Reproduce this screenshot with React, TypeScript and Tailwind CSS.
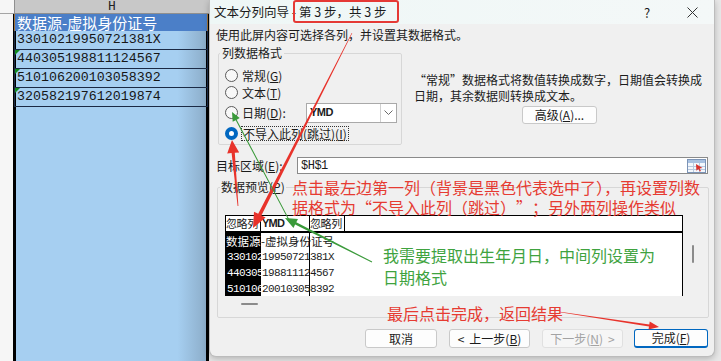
import React from 'react'

function arrow(x1: number, y1: number, x2: number, y2: number, w1: number, w2: number, hl: number, hw: number) {
  const dx = x2 - x1
  const dy = y2 - y1
  const len = Math.hypot(dx, dy)
  const ux = dx / len
  const uy = dy / len
  const nx = -uy
  const ny = ux
  const bx = x2 - ux * hl
  const by = y2 - uy * hl
  const pts = [
    [x1 + (nx * w1) / 2, y1 + (ny * w1) / 2],
    [bx + (nx * w2) / 2, by + (ny * w2) / 2],
    [bx + nx * hw, by + ny * hw],
    [x2, y2],
    [bx - nx * hw, by - ny * hw],
    [bx - (nx * w2) / 2, by - (ny * w2) / 2],
    [x1 - (nx * w1) / 2, y1 - (ny * w1) / 2],
  ]
  return pts.map((p) => p.map((v) => v.toFixed(1)).join(',')).join(' ')
}

function Radio({ on }: { on?: boolean }) {
  return on ? (
    <span className="w-[13px] h-[13px] rounded-full border-[4px] border-[#0067c0] bg-white shrink-0" />
  ) : (
    <span className="w-[13px] h-[13px] rounded-full border border-[#5a5a5a] bg-[#f8f8f8] shrink-0" />
  )
}

const sheetRows = ['33010219950721381X', '440305198811124567', '510106200103058392', '320582197612019874']

const preview = [
  { a: '330102', b: '19950721381X' },
  { a: '440305', b: '198811124567' },
  { a: '510106', b: '200103058392' },
]

function Btn({ children, w, tone }: { children: React.ReactNode; w: string; tone?: 'off' | 'main' }) {
  const base = 'h-[19px] rounded-[3px] flex items-center justify-center text-[12px] leading-none'
  if (tone === 'off') return <div className={`${base} ${w} border border-[#e0e0e0] bg-[#f6f6f6] text-[#a3a3a3]`}>{children}</div>
  if (tone === 'main') return <div className={`${base} ${w} border border-[#0067c0] border-b-2 bg-[#fdfdfd]`}>{children}</div>
  return <div className={`${base} ${w} border border-[#c9c9c9] bg-[#fdfdfd]`}>{children}</div>
}

export default function App() {
  return (
    <div className="relative w-[721px] h-[361px] overflow-hidden flex bg-[#e7e7e7] font-['Noto_Sans_CJK_SC',sans-serif] text-[#1b1b1b]">
      {/* spreadsheet column H */}
      <div className="w-[209px] h-full flex flex-col shrink-0">
        <div className="h-[14px] flex shrink-0">
          <div className="w-[14px] bg-[#f6f6f6] border-b border-[#a5a5a5]" />
          <div className="flex-1 bg-[#c8c8c8] border-b border-l border-[#8f8f8f] flex items-center justify-center text-[13px] leading-none font-['Liberation_Mono',monospace] text-[#222]">
            H
          </div>
        </div>
        <div className="flex-1 flex">
          <div className="w-[13px] bg-[#f6f6f6]" />
          <div className="flex-1 border-x-[3px] border-black bg-[linear-gradient(to_right,#a6cff1_85%,#8cadc9)] flex flex-col">
            <div className="-mx-[2px] h-[17px] bg-[#4b7fc8] border-x border-[#a0743a] flex items-center pl-[2px] text-[15px] leading-none text-white whitespace-nowrap">
              数据源-虚拟身份证号
            </div>
            {sheetRows.map((r, i) => (
              <div key={r} className="relative -mx-[2px] h-[19px] border border-t-0 border-[#1b2a45] flex items-center pl-[2px] font-['Liberation_Mono',monospace] text-[13.3px] leading-none text-[#161616]">
                {i > 0 && <span className="absolute left-0 top-0 w-0 h-0 border-t-[5px] border-r-[5px] border-t-[#118a1b] border-r-transparent" />}
                {r}
              </div>
            ))}
          </div>
        </div>
      </div>

      {/* wizard dialog */}
      <div className="w-[506px] h-[357px] bg-[#f0f0f0] border-x border-b border-[#bcbcbc] rounded-b-[7px] shadow-[0_2px_6px_rgba(0,0,0,0.22)] flex flex-col overflow-hidden shrink-0">
        <div className="h-[24px] bg-[linear-gradient(to_right,#eef7f6,#f4f8f8)] flex items-center pl-[4px] shrink-0">
          <span className="text-[12.5px] leading-none whitespace-nowrap">文本分列向导 - 第 3 步，共 3 步</span>
          <span className="ml-auto w-[46px] text-center text-[13px] leading-none">?</span>
          <span className="w-[44px] flex justify-center">
            <svg width="11" height="11" viewBox="0 0 11 11">
              <path d="M0.5 0.5 L10.5 10.5 M10.5 0.5 L0.5 10.5" stroke="#333" strokeWidth="1" />
            </svg>
          </span>
        </div>

        <div className="flex-1 flex flex-col px-[6px] text-[12px]">
          <div className="mt-[3px] h-[16px] leading-[16px] whitespace-nowrap">使用此屏内容可选择各列，并设置其数据格式。</div>

          <div className="mt-[2px] h-[100px] flex">
            <fieldset className="ml-[2px] w-[184px] h-[100px] border border-[#d7d7d7] rounded-[2px] shrink-0">
              <legend className="ml-[1px] px-[2px] leading-[16px]">列数据格式</legend>
              <div className="mt-[6px] pl-[6px] flex flex-col">
                <div className="h-[17px] flex items-center gap-[4px]">
                  <Radio />
                  <span>常规(<u>G</u>)</span>
                </div>
                <div className="h-[17px] flex items-center gap-[4px]">
                  <Radio />
                  <span>文本(<u>T</u>)</span>
                </div>
                <div className="h-[23px] flex items-center gap-[4px]">
                  <Radio />
                  <span className="w-[60px]">日期(<u>D</u>):</span>
                  <div className="w-[91px] h-[20px] border border-[#a9a9a9] bg-white flex">
                    <span className="flex-1 pl-[3px] flex items-center text-[11px] font-bold tracking-[-0.5px] font-['Liberation_Sans',sans-serif]">YMD</span>
                    <span className="w-[16px] border-l border-[#d0d0d0] flex items-center justify-center">
                      <svg width="9" height="6" viewBox="0 0 9 6">
                        <path d="M0.5 0.5 L4.5 4.5 L8.5 0.5" stroke="#6a6a6a" fill="none" />
                      </svg>
                    </span>
                  </div>
                </div>
                <div className="h-[18px] flex items-center gap-[3px]">
                  <Radio on />
                  <span className="h-[15px] leading-[13px] border border-dotted border-[#333] px-[1px] whitespace-nowrap">
                    不导入此列(跳过)(<u>I</u>)
                  </span>
                </div>
              </div>
            </fieldset>

            <div className="flex-1 pl-[12px] flex flex-col">
              <div className="mt-[27px] leading-[16px] whitespace-nowrap">
                “常规”数据格式将数值转换成数字，日期值会转换成
                <br />
                日期，其余数据则转换成文本。
              </div>
              <div className="ml-[108px] mt-[2px] w-[75px] h-[18px] rounded-[3px] border border-[#c9c9c9] bg-[#fdfdfd] flex items-center justify-center leading-none">
                高级(<u>A</u>)...
              </div>
            </div>
          </div>

          <div className="mt-[12px] h-[17px] flex items-center">
            <span className="w-[81px] whitespace-nowrap">目标区域(<u>E</u>):</span>
            <div className="flex-1 h-[17px] border border-[#8a8a8a] bg-white flex items-center justify-between pl-[3px] pr-[1px]">
              <span className="text-[12px] font-['Liberation_Mono',monospace] tracking-[-0.5px]">$H$1</span>
              <svg width="19" height="14" viewBox="0 0 19 14">
                <rect x="0.5" y="0.5" width="18" height="13" fill="#f3f7fc" stroke="#7b93b6" />
                <rect x="1" y="1" width="17" height="3" fill="#a8c1e1" />
                <path d="M1 7.5 H18 M1 10.5 H18 M6.5 4 V13 M12.5 4 V13" stroke="#b9c9df" />
                <path d="M9 5 L15.5 9 L12.6 9.4 L14 12 L12.8 12.6 L11.4 10 L9.4 11.8 Z" fill="#d8322d" />
              </svg>
            </div>
          </div>

          <fieldset className="mt-[5px] ml-[1px] w-[492px] h-[139px] border border-[#d7d7d7] rounded-[2px]">
            <legend className="ml-[2px] px-[1px] leading-[16px]">数据预览(<u>P</u>)</legend>
            <div className="mt-[20px] ml-[7px] flex">
              <div className="w-[458px] h-[81px] border-x border-t border-black bg-white overflow-hidden flex flex-col">
                <div className="h-[17px] border-b-2 border-black flex shrink-0 text-[11px] leading-[15px] tracking-[-0.4px]">
                  <span className="w-[35px] border-r border-black whitespace-nowrap">忽略列</span>
                  <span className="w-[49px] border-r border-black pl-[1px] font-bold tracking-[-0.8px] font-['Liberation_Sans',sans-serif]">YMD</span>
                  <span className="w-[35px] border-r border-black whitespace-nowrap">忽略列</span>
                </div>
                <div className="h-[16px] flex shrink-0 text-[11.5px] leading-[16px]">
                  <span className="w-[35px] bg-black text-white whitespace-nowrap overflow-hidden">数据源-虚拟</span>
                  <span className="w-[49px] border-r border-black whitespace-nowrap">-虚拟身份证号</span>
                </div>
                {preview.map((p) => (
                  <div key={p.a} className="h-[16px] flex shrink-0 font-['Liberation_Mono',monospace] text-[11px] leading-[16px] tracking-[-0.6px]">
                    <span className="w-[35px] bg-black text-white whitespace-nowrap overflow-hidden pl-[1px]">{p.a}</span>
                    <span className="w-[49px] border-r border-black whitespace-nowrap pl-[1px]">{p.b}</span>
                  </div>
                ))}
                <div className="flex-1 flex">
                  <span className="w-[35px] bg-black" />
                  <span className="w-[49px] border-r border-black" />
                </div>
              </div>
              <div className="w-[25px]">
                <div className="ml-[9px] mt-[30px] w-[2px] h-[18px] bg-[#8b8b8b] rounded" />
              </div>
            </div>
            <div className="mt-[7px] ml-[23px] w-[17px] h-[2px] bg-[#8b8b8b] rounded" />
          </fieldset>

          <div className="mt-[11px] flex justify-end">
            <Btn w="w-[72px]">取消</Btn>
            <div className="w-[12px]" />
            <Btn w="w-[81px]">
              <span className="mr-[5px]">&lt;</span>上一步(<u>B</u>)
            </Btn>
            <div className="w-[12px]" />
            <Btn w="w-[81px]" tone="off">
              下一步(<u>N</u>)<span className="ml-[5px]">&gt;</span>
            </Btn>
            <div className="w-[11px]" />
            <Btn w="w-[74px]" tone="main">
              完成(<u>F</u>)
            </Btn>
          </div>
        </div>
      </div>

      {/* annotations drawn over the screenshot */}
      <div className="absolute left-[293px] top-0 w-[106px] h-[23px] border-2 border-[#e53935] rounded-[3px]" />
      <div className="absolute left-[292px] top-[177px] text-[16px] leading-[20px] text-[#e63b32] whitespace-nowrap">
        点击最左边第一列（背景是黑色代表选中了），再设置列数
        <br />
        据格式为<span className="inline-block w-[16px] text-right">“</span>不导入此列（跳过）<span className="inline-block w-[16px] text-left">”</span>；另外两列操作类似
      </div>
      <div className="absolute left-[383px] top-[244px] text-[16px] leading-[22px] text-[#3fa33f] whitespace-nowrap">
        我需要提取出生年月日，中间列设置为
        <br />
        日期格式
      </div>
      <div className="absolute left-[387px] top-[303px] text-[16px] leading-[20px] text-[#e63b32] whitespace-nowrap">
        最后点击完成，返回结果
      </div>
      <svg className="absolute inset-0 pointer-events-none" width="721" height="361" viewBox="0 0 721 361">
        <polygon points={arrow(352, 33, 253, 228, 0.6, 3.6, 15, 6.5)} fill="#e8332b" />
        <polygon points={arrow(238, 206, 232, 140, 0.8, 3.2, 13, 6)} fill="#e8332b" />
        <polygon points={arrow(289, 220, 232, 112, 0.8, 1.2, 9, 4)} fill="#3a9a3a" />
        <polygon points={arrow(372, 262, 285, 218, 0.8, 2.6, 12, 5)} fill="#3a9a3a" />
        <polygon points={arrow(560, 312, 659, 327, 0.6, 2, 10, 4)} fill="#e8332b" />
      </svg>
    </div>
  )
}
